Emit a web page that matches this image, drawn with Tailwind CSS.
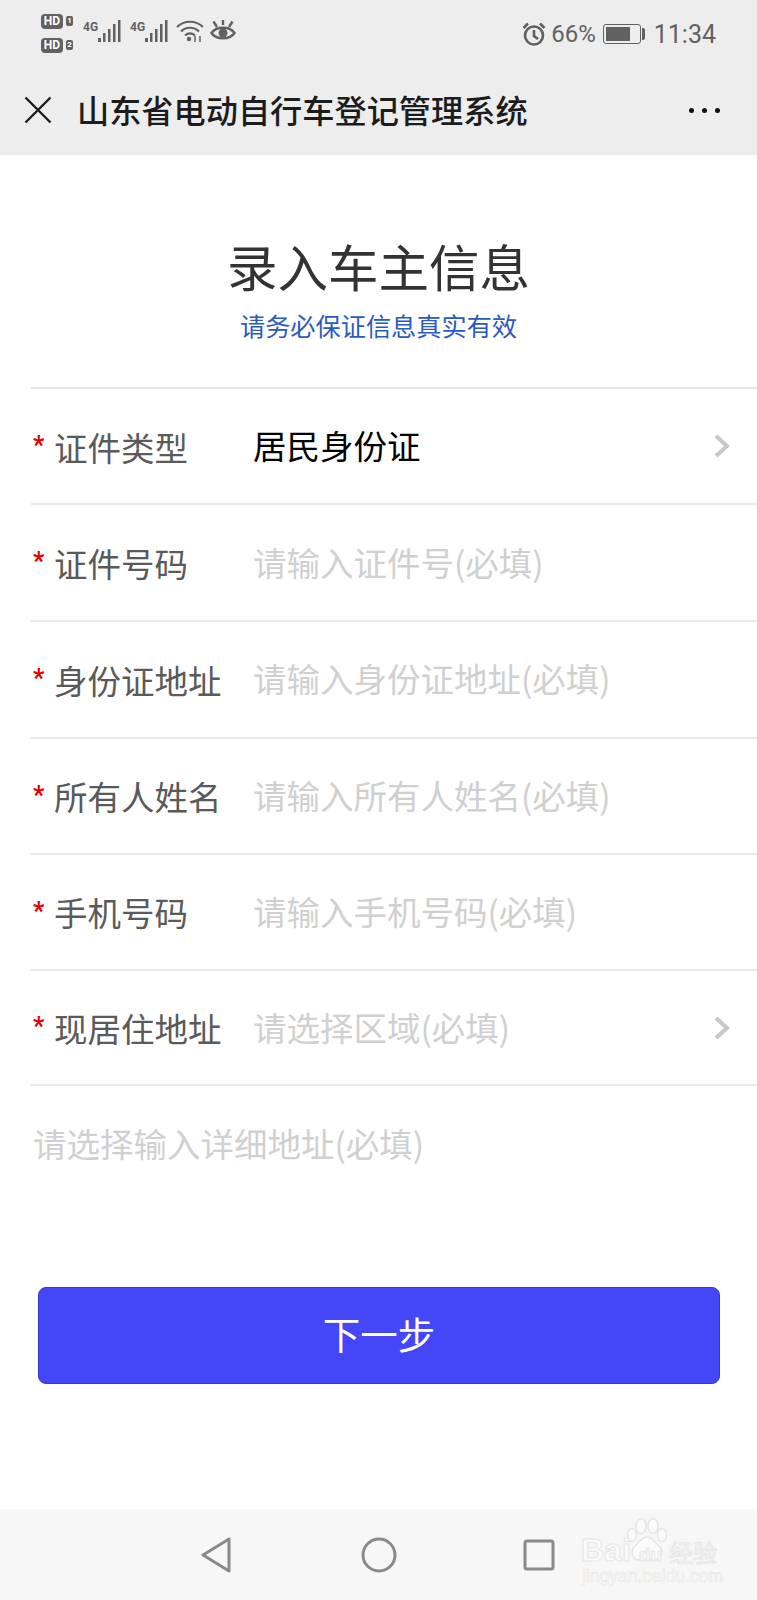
<!DOCTYPE html>
<html lang="zh-CN">
<head>
    <meta charset="UTF-8">
    <meta name="viewport" content="width=device-width, initial-scale=1.0">
    <title>录入车主信息</title>
    <script src="https://cdn.jsdelivr.net/npm/@tailwindcss/browser@4"></script>
</head>
<body class="bg-white">
<div class="relative w-[757px] h-[1600px] flex flex-col overflow-hidden bg-white font-['Noto_Sans_CJK_SC','Noto_Sans',sans-serif]">

    <!-- status bar + title bar -->
    <div class="h-[155px] shrink-0 bg-[#ededed] flex flex-col">
        <div class="h-[66px] flex items-center justify-between pl-[41px] pr-[41px] pt-[2px] text-[#616161]">
            <div class="flex items-center">
                <div class="w-[34px] flex flex-col gap-[9px] -mt-[2px] font-['Roboto',sans-serif]">
                    <div class="flex items-center gap-[3px]">
                        <span class="w-[22px] h-[15px] rounded-[4px] bg-[#616161] text-white text-[12px] leading-[15px] font-bold text-center">HD</span>
                        <span class="w-[7px] h-[10px] rounded-[2px] bg-[#616161] text-white text-[8px] leading-[10px] font-bold text-center">1</span>
                    </div>
                    <div class="flex items-center gap-[3px]">
                        <span class="w-[22px] h-[15px] rounded-[4px] bg-[#616161] text-white text-[12px] leading-[15px] font-bold text-center">HD</span>
                        <span class="w-[7px] h-[10px] rounded-[2px] bg-[#616161] text-white text-[8px] leading-[10px] font-bold text-center">2</span>
                    </div>
                </div>
                <div class="flex items-start ml-[8px] -mt-[6px]">
                    <span class="text-[12px] leading-[14px] font-bold font-['Roboto',sans-serif] mt-[1px]">4G</span>
                    <svg width="24" height="24" viewBox="0 0 24 24" fill="#616161"><rect x="0" y="19" width="3" height="4"/><rect x="5" y="14" width="2.5" height="9"/><rect x="10" y="10" width="2.5" height="13"/><rect x="15" y="5" width="2.5" height="18"/><rect x="20" y="1" width="2.5" height="22"/></svg>
                </div>
                <div class="flex items-start ml-[8px] -mt-[6px]">
                    <span class="text-[12px] leading-[14px] font-bold font-['Roboto',sans-serif] mt-[1px]">4G</span>
                    <svg width="24" height="24" viewBox="0 0 24 24" fill="#616161"><rect x="0" y="19" width="3" height="4"/><rect x="5" y="14" width="2.5" height="9"/><rect x="10" y="10" width="2.5" height="13"/><rect x="15" y="5" width="2.5" height="18"/><rect x="20" y="1" width="2.5" height="22"/></svg>
                </div>
                <svg class="ml-[7px] -mt-[6px]" width="28" height="24" viewBox="0 0 28 24" fill="none" stroke="#616161" stroke-width="2.2"><path d="M1 8C8 1 20 1 27 8"/><path d="M5 12.500C10 7.500 18 7.500 23 12.500"/><path d="M9 16.500C12 14 16 14 19 16.500"/><circle cx="13" cy="20" r="2.200" fill="#616161" stroke="none"/><path d="M19 17V23M24 17V23" stroke-width="1.500"/></svg>
                <svg class="ml-[6px] -mt-[6px]" width="26" height="24" viewBox="0 0 26 24" fill="none" stroke="#616161" stroke-width="2.400"><path d="M1.500 14C6 7 20 7 24.500 14C20 21 6 21 1.500 14Z"/><circle cx="13" cy="14" r="4.500" fill="#616161" stroke="none"/><path d="M3.500 2.500L7 8M13 1V6M22.500 2.500L19 8"/></svg>
            </div>
            <div class="flex items-center font-['Roboto',sans-serif] text-[25px] leading-none">
                <svg width="24" height="24" viewBox="0 0 24 24" fill="none" stroke="#616161" stroke-width="2.600"><circle cx="12" cy="13.500" r="9"/><path d="M12 8V14L16 17"/><path d="M1.500 6L6 1.500M22.500 6L18 1.500"/></svg>
                <span class="ml-[5px] text-[24px]">66%</span>
                <div class="ml-[7px] w-[38px] h-[20px] rounded-[3px] border border-[#616161] p-[2px]">
                    <div class="w-[24px] h-full bg-[#616161]"></div>
                </div>
                <div class="ml-[1px] w-[3px] h-[12px] bg-[#616161] rounded-r-[2px]"></div>
                <span class="ml-[9px]">11:34</span>
            </div>
        </div>
        <div class="flex-1 flex items-center pl-[24px] pr-[37px] pb-[2px]">
            <svg width="28" height="28" viewBox="0 0 28 28" fill="none" stroke="#1c1c1c" stroke-width="2.400"><path d="M1.500 1.500L26.500 26.500M26.500 1.500L1.500 26.500"/></svg>
            <h1 class="ml-[25px] text-[32.200px] leading-none font-medium text-[#1c1c1c] whitespace-nowrap">山东省电动自行车登记管理系统</h1>
            <div class="ml-auto mt-[2px] flex items-center gap-[8px]">
                <span class="w-[5px] h-[5px] rounded-full bg-[#111]"></span>
                <span class="w-[5px] h-[5px] rounded-full bg-[#111]"></span>
                <span class="w-[5px] h-[5px] rounded-full bg-[#111]"></span>
            </div>
        </div>
    </div>

    <!-- heading -->
    <div class="h-[232px] shrink-0 flex flex-col items-center pt-[76px]">
        <h2 class="text-[50.500px] leading-[68px] text-[#333] whitespace-nowrap">录入车主信息</h2>
        <p class="mt-[9px] text-[25.200px] leading-[34px] text-[#2a5bc0]">请务必保证信息真实有效</p>
    </div>

    <!-- form -->
    <div class="ml-[31px] flex flex-col">
        <div class="h-[116px] border-t-2 border-[#e8e8e8] flex items-center text-[33.500px]">
            <span class="w-[23px] pl-[2px] font-['Roboto',sans-serif] font-bold text-[#e60000] text-[25px] leading-none -mt-[2px]">*</span>
            <span class="w-[199px] text-[#5a5a5a] mt-[2px]">证件类型</span>
            <span class="text-black -mt-[1px]">居民身份证</span>
            <svg class="ml-auto mr-[27px]" width="16" height="24" viewBox="0 0 16 24" fill="none" stroke="#c8c8c8" stroke-width="4"><path d="M2 2L13 12L2 22"/></svg>
        </div>
        <div class="h-[117px] border-t-2 border-[#e8e8e8] flex items-center text-[33.500px]">
            <span class="w-[23px] pl-[2px] font-['Roboto',sans-serif] font-bold text-[#e60000] text-[25px] leading-none -mt-[2px]">*</span>
            <span class="w-[199px] text-[#5a5a5a] mt-[2px]">证件号码</span>
            <span class="text-[#d0d0d0] -mt-[1px]">请输入证件号(必填)</span>
        </div>
        <div class="h-[117px] border-t-2 border-[#e8e8e8] flex items-center text-[33.500px]">
            <span class="w-[23px] pl-[2px] font-['Roboto',sans-serif] font-bold text-[#e60000] text-[25px] leading-none -mt-[2px]">*</span>
            <span class="w-[199px] text-[#5a5a5a] mt-[1px]">身份证地址</span>
            <span class="text-[#d0d0d0] -mt-[2px]">请输入身份证地址(必填)</span>
        </div>
        <div class="h-[116px] border-t-2 border-[#e8e8e8] flex items-center text-[33.500px]">
            <span class="w-[23px] pl-[2px] font-['Roboto',sans-serif] font-bold text-[#e60000] text-[25px] leading-none -mt-[2px]">*</span>
            <span class="w-[199px] text-[#5a5a5a]">所有人姓名</span>
            <span class="text-[#d0d0d0] -mt-[2px]">请输入所有人姓名(必填)</span>
        </div>
        <div class="h-[116px] border-t-2 border-[#e8e8e8] flex items-center text-[33.500px]">
            <span class="w-[23px] pl-[2px] font-['Roboto',sans-serif] font-bold text-[#e60000] text-[25px] leading-none -mt-[2px]">*</span>
            <span class="w-[199px] text-[#5a5a5a] mt-[1px]">手机号码</span>
            <span class="text-[#d0d0d0] -mt-[1px]">请输入手机号码(必填)</span>
        </div>
        <div class="h-[115px] border-t-2 border-[#e8e8e8] flex items-center text-[33.500px]">
            <span class="w-[23px] pl-[2px] font-['Roboto',sans-serif] font-bold text-[#e60000] text-[25px] leading-none -mt-[2px]">*</span>
            <span class="w-[199px] text-[#5a5a5a] mt-[2px]">现居住地址</span>
            <span class="text-[#d0d0d0] -mt-[1px]">请选择区域(必填)</span>
            <svg class="ml-auto mr-[27px]" width="16" height="24" viewBox="0 0 16 24" fill="none" stroke="#c8c8c8" stroke-width="4"><path d="M2 2L13 12L2 22"/></svg>
        </div>
        <div class="h-[116px] border-t-2 border-[#e8e8e8] flex items-center text-[33.500px] text-[#d0d0d0] pl-[2px]">
            请选择输入详细地址(必填)
        </div>
    </div>

    <!-- next button -->
    <div class="mt-[87px] px-[38px]">
        <button class="w-[682px] h-[97px] pb-[5px] rounded-[8px] bg-[#4447f7] border border-[#3538c8] text-white text-[37.500px] leading-none">下一步</button>
    </div>

    <!-- android nav -->
    <div class="mt-auto h-[91px] bg-[#f7f7f7] flex items-center pl-[200px]">
        <svg width="32" height="36" viewBox="0 0 32 36" fill="none" stroke="#8a8a8a" stroke-width="3" stroke-linejoin="round"><path d="M29 2V34L3 18Z"/></svg>
        <svg class="ml-[129px]" width="36" height="36" viewBox="0 0 36 36" fill="none" stroke="#8a8a8a" stroke-width="3"><circle cx="18" cy="18" r="16"/></svg>
        <svg class="ml-[126px]" width="32" height="32" viewBox="0 0 32 32" fill="none" stroke="#8a8a8a" stroke-width="3" stroke-linejoin="round"><rect x="2" y="2" width="28" height="28" rx="2"/></svg>
    </div>

    <!-- baidu watermark -->
    <div class="absolute left-[580px] top-[1516px] w-[140px] h-[70px] text-[#fbfbfb] [-webkit-text-stroke:1px_#e6e6e6] font-['Liberation_Sans',sans-serif] whitespace-nowrap">
        <svg class="absolute left-[46px] top-0" width="44" height="46" viewBox="0 0 44 46" fill="#fbfbfb" stroke="#e4e4e4" stroke-width="1.500"><ellipse cx="6" cy="19" rx="4.500" ry="6.500"/><ellipse cx="15" cy="10" rx="5" ry="7.500"/><ellipse cx="27" cy="10" rx="5" ry="7.500"/><ellipse cx="36" cy="19" rx="4.500" ry="6.500"/><path d="M21 21C27 21 29 27 33 30C38 34 36 44 29 44H13C6 44 4 34 9 30C13 27 15 21 21 21Z"/></svg>
        <span class="absolute left-[1px] top-[18px] text-[32px] leading-[32px] font-bold">Bai</span>
        <span class="absolute left-[59px] top-[29px] text-[19px] leading-[20px] font-bold">du</span>
        <span class="absolute left-[89px] top-[23px] text-[24px] leading-[26px] font-['Noto_Sans_CJK_SC',sans-serif]">经验</span>
        <span class="absolute left-[2px] top-[50px] text-[17.500px] leading-[20px] [-webkit-text-stroke:0.6px_#e6e6e6]">jingyan.baidu.com</span>
    </div>
</div>
</body>
</html>
